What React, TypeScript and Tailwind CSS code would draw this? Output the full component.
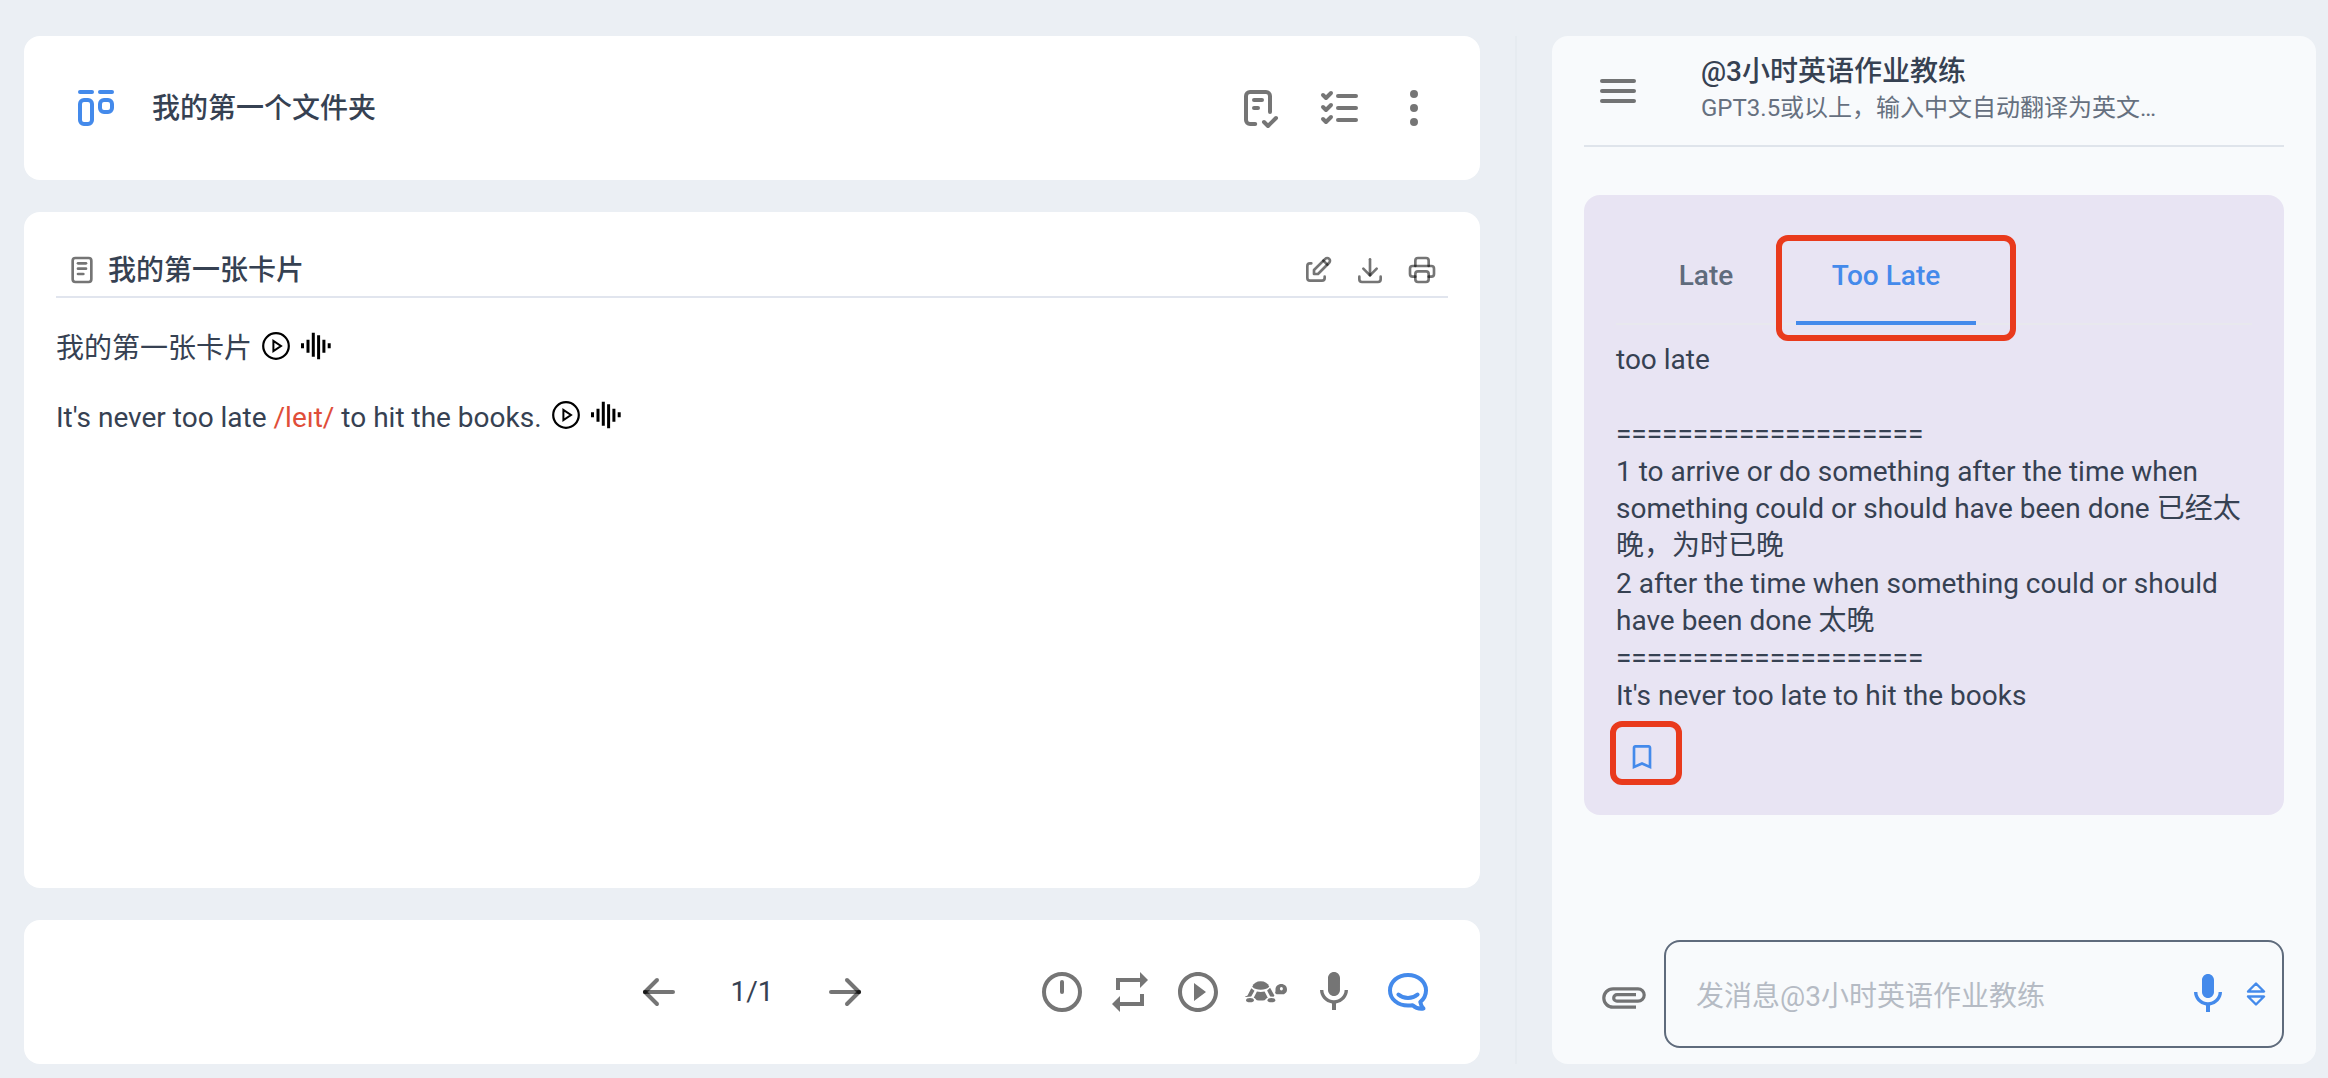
import type { ReactNode } from "react";

/* Outline icon on a 24 unit grid; translucent strokes darken where they cross. */
function Outline({ paths, className = "size-12" }: { paths: string[]; className?: string }) {
  return (
    <svg viewBox="0 0 24 24" fill="none" stroke="currentColor" strokeWidth={2} strokeLinecap="round" strokeLinejoin="round" className={className} aria-hidden="true">
      {paths.map((d) => (
        <path key={d} d={d} />
      ))}
    </svg>
  );
}

function Solid({ d, className = "size-12" }: { d: string; className?: string }) {
  return (
    <svg viewBox="0 0 24 24" fill="currentColor" className={className} aria-hidden="true">
      <path d={d} />
    </svg>
  );
}

const MIC =
  "M12 14c1.66 0 2.99-1.34 2.99-3L15 5c0-1.66-1.34-3-3-3S9 3.34 9 5v6c0 1.66 1.34 3 3 3zm5.3-3c0 3-2.54 5.1-5.3 5.1S6.7 14 6.7 11H5c0 3.41 2.72 6.23 6 6.72V21h2v-3.28c3.28-.48 6-3.3 6-6.72h-1.7z";

function IconButton({ label, children, className = "text-black/54" }: { label: string; children: ReactNode; className?: string }) {
  return (
    <button type="button" aria-label={label} className={`shrink-0 cursor-pointer ${className}`}>
      {children}
    </button>
  );
}

function PlayIcon() {
  return (
    <svg viewBox="0 0 28 28" fill="none" stroke="currentColor" strokeWidth={2.2} className="size-7" aria-hidden="true">
      <circle cx="14" cy="14" r="12.8" />
      <path d="M11.4 8.8v10.4L19 14z" strokeWidth={2} />
    </svg>
  );
}

function WaveIcon() {
  return (
    <svg viewBox="0 0 30 28" fill="currentColor" className="h-7 w-[30px]" aria-hidden="true">
      <path d="M0 11.3h3v5H0zM5.5 7.7h3v13h-3zM10.8 .7h3v24h-3zM16.1 3.3h3v24h-3zM21.4 7.7h3v13h-3zM26.7 11.3h3v5h-3z" />
    </svg>
  );
}

function TurtleIcon() {
  return (
    <svg viewBox="0 0 48 48" fill="currentColor" className="size-12" aria-hidden="true">
      <path d="M10.2 18.8C11.6 15 14.6 13.2 18.7 13.2s7.2 1.8 8.6 5.6C25 21 22 21.7 18.7 21.7s-6.5-.7-8.500-2.900z" />
      <path d="M9.3 20.2l3.2 2.600-3.300 5.800c-2 .2-4 .4-6.300.3.400-.8 1.500-.7 2.600-1.500z" />
      <path d="M14.9 23.600c2.600.4 5 .4 7.700 0l3.200 6.200c-1.700.4-2.400 2.200-3.200 2.400-2.300.3-5.300.3-7.700 0-.9-.3-1.400-2-3.200-2.400z" />
      <path d="M25.1 22.600l3-2.800 4.300 7.800-.8 1.200-3.400-.4z" />
      <ellipse cx="8" cy="32.2" rx="3.9" ry="2.1" />
      <ellipse cx="29.4" cy="32.2" rx="3.9" ry="2.1" />
      <path fillRule="evenodd" d="M39.2 16c3.500 0 5.800 2.300 5.800 5.400 0 2.200-.9 3.300-1.800 3.800l-1.200 1h-7.500l-1.500-1.200c.5-1 .5-2 .5-3.500C33.500 18.300 36 16 39.2 16zm.2 2.900a1.500 1.800 0 1 0 0 3.600 1.500 1.800 0 1 0 0-3.600z" />
    </svg>
  );
}

function ChatIcon() {
  return (
    <svg viewBox="0 0 48 48" fill="none" stroke="currentColor" strokeWidth={4} strokeLinecap="round" strokeLinejoin="round" className="size-12" aria-hidden="true">
      <path d="M36.3 34C40 30.8 42 27 42 22.4 42 13.6 34 7 24 7S6 13.600 6 22.400 14 37.600 24 37.600c1.600 0 3.100-.1 4.600-.4 2.900 2.800 6.600 4 10.900 3.400-1.600-1.800-2.800-4-3.200-6.600z" />
      <path d="M14.4 26.5c5.400 4.700 13.800 4.700 19.200 0" />
    </svg>
  );
}

function PaperclipIcon() {
  return (
    <svg viewBox="0 0 44 22" fill="none" stroke="currentColor" strokeWidth={3.2} className="h-[22px] w-11" aria-hidden="true">
      <path d="M34 20.2H11a9.200 9.200 0 0 1 0-18.400h25a6.200 6.200 0 0 1 0 12.400H15a3.300 3.300 0 0 1 0-6.600h19" />
    </svg>
  );
}

function SortIcon() {
  return (
    <svg viewBox="0 0 20 24" fill="none" stroke="currentColor" strokeWidth={2.4} strokeLinejoin="round" className="h-6 w-5" aria-hidden="true">
      <path d="M10 1.500l8 8H2z" />
      <path d="M10 22.500l8-8H2z" />
    </svg>
  );
}

function AudioButtons() {
  return (
    <>
      <IconButton label="播放" className="ml-2.5 text-black">
        <PlayIcon />
      </IconButton>
      <IconButton label="跟读" className="ml-[11px] text-black">
        <WaveIcon />
      </IconButton>
    </>
  );
}

function FolderHeader() {
  return (
    <header className="flex h-36 shrink-0 items-center rounded-2xl bg-white pr-[42px] pl-12">
      <span className="text-[#448aeb]">
        <Outline
          paths={[
            "M4 4h6",
            "M14 4h6",
            "M6 8h2a2 2 0 0 1 2 2v8a2 2 0 0 1 -2 2h-2a2 2 0 0 1 -2 -2v-8a2 2 0 0 1 2 -2z",
            "M16 8h2a2 2 0 0 1 2 2v2a2 2 0 0 1 -2 2h-2a2 2 0 0 1 -2 -2v-2a2 2 0 0 1 2 -2z",
          ]}
        />
      </span>
      <h1 className="ml-8 flex-1 pt-0.5 font-medium">我的第一个文件夹</h1>
      <IconButton label="作业">
        <Outline paths={["M9.615 20h-2.615a2 2 0 0 1 -2 -2v-12a2 2 0 0 1 2 -2h8a2 2 0 0 1 2 2v8", "M14 19l2 2l4 -4", "M9 8h4", "M9 12h2"]} />
      </IconButton>
      <IconButton label="列表" className="ml-8 text-black/54">
        <Outline paths={["M3.5 5.5l1.5 1.5l2.5 -2.5", "M3.5 11.5l1.5 1.5l2.5 -2.5", "M3.5 17.5l1.5 1.5l2.5 -2.5", "M11 6h9", "M11 12h9", "M11 18h9"]} />
      </IconButton>
      <IconButton label="更多" className="ml-[26px] text-black/54">
        <Solid d="M12 3a2 2 0 1 0 0 4 2 2 0 1 0 0-4zM12 10a2 2 0 1 0 0 4 2 2 0 1 0 0-4zM12 17a2 2 0 1 0 0 4 2 2 0 1 0 0-4z" />
      </IconButton>
    </header>
  );
}

function Card() {
  return (
    <article className="flex-1 rounded-2xl bg-white px-8 pt-8">
      <div className="flex h-[54px] items-center border-b-2 border-[#e1e5ee] px-2.5">
        <span className="text-black/54">
          <Outline
            className="size-8"
            paths={["M7 3h10a2 2 0 0 1 2 2v14a2 2 0 0 1 -2 2h-10a2 2 0 0 1 -2 -2v-14a2 2 0 0 1 2 -2z", "M9 7h6", "M9 11h6", "M9 15h4"]}
          />
        </span>
        <h2 className="ml-2.5 flex-1 pt-0.5 font-medium">我的第一张卡片</h2>
        <div className="flex gap-5">
          <IconButton label="编辑">
            <Outline
              className="size-8"
              paths={[
                "M7 7h-1a2 2 0 0 0 -2 2v9a2 2 0 0 0 2 2h9a2 2 0 0 0 2 -2v-1",
                "M20.385 6.585a2.1 2.1 0 0 0 -2.970 -2.970l-8.415 8.385v3h3l8.385 -8.415z",
                "M16 5l3 3",
              ]}
            />
          </IconButton>
          <IconButton label="下载">
            <Outline className="size-8" paths={["M4 17v2a2 2 0 0 0 2 2h12a2 2 0 0 0 2 -2v-2", "M7 11l5 5l5 -5", "M12 4v12"]} />
          </IconButton>
          <IconButton label="打印">
            <Outline
              className="size-8"
              paths={[
                "M17 17h2a2 2 0 0 0 2 -2v-4a2 2 0 0 0 -2 -2h-14a2 2 0 0 0 -2 2v4a2 2 0 0 0 2 2h2",
                "M17 9v-4a2 2 0 0 0 -2 -2h-6a2 2 0 0 0 -2 2v4",
                "M9 13h6a2 2 0 0 1 2 2v4a2 2 0 0 1 -2 2h-6a2 2 0 0 1 -2 -2v-4a2 2 0 0 1 2 -2z",
              ]}
            />
          </IconButton>
        </div>
      </div>
      <div className="mt-7 flex h-10 items-center">
        <p className="pt-1.5">我的第一张卡片</p>
        <AudioButtons />
      </div>
      <div className="mt-[29px] flex h-10 items-center">
        <p className="pt-1.5">
          It's never too late <span className="text-[#e04e39]">/leıt/</span> to hit the books.
        </p>
        <AudioButtons />
      </div>
    </article>
  );
}

function PlayerBar() {
  return (
    <footer className="grid h-36 shrink-0 grid-cols-[1fr_auto_1fr] items-center rounded-2xl bg-white px-12">
      <span />
      <nav aria-label="翻页" className="flex items-center gap-10">
        <IconButton label="上一张">
          <Outline paths={["M5 12h14", "M5 12l6 6", "M5 12l6 -6"]} />
        </IconButton>
        <span className="w-[58px] text-center">1/1</span>
        <IconButton label="下一张">
          <Outline paths={["M5 12h14", "M13 18l6 -6", "M13 6l6 6"]} />
        </IconButton>
      </nav>
      <div className="flex items-center justify-end gap-5">
        <IconButton label="定时">
          <svg viewBox="0 0 48 48" fill="none" stroke="currentColor" strokeWidth={4} strokeLinecap="round" className="size-12" aria-hidden="true">
            <circle cx="24" cy="24" r="18" />
            <path d="M24 14v10" />
          </svg>
        </IconButton>
        <IconButton label="循环">
          <Solid d="M7 7h10v3l4-4-4-4v3H5v6h2V7zm10 10H7v-3l-4 4 4 4v-3h12v-6h-2v4z" />
        </IconButton>
        <IconButton label="播放">
          <Solid d="M10 16.5l6-4.500-6-4.500v9zM12 2C6.480 2 2 6.480 2 12s4.480 10 10 10 10-4.480 10-10S17.520 2 12 2zm0 18c-4.410 0-8-3.590-8-8s3.590-8 8-8 8 3.590 8 8-3.590 8-8 8z" />
        </IconButton>
        <IconButton label="慢速">
          <TurtleIcon />
        </IconButton>
        <IconButton label="录音">
          <Solid d={MIC} />
        </IconButton>
        <IconButton label="聊天" className="ml-1.5 text-[#448aeb]">
          <ChatIcon />
        </IconButton>
      </div>
    </footer>
  );
}

function Tabs() {
  return (
    <div role="tablist" className="flex h-[98px] border-b-2 border-[#e8e8ee] font-medium">
      <button type="button" role="tab" aria-selected="false" className="h-[98px] w-[180px] cursor-pointer text-[#5f6b7c]">
        Late
      </button>
      <div className="relative h-[98px] w-[180px]">
        <button type="button" role="tab" aria-selected="true" className="size-full cursor-pointer border-b-4 border-[#448aeb] pt-1 text-[#448aeb]">
          Too Late
        </button>
        <span className="pointer-events-none absolute top-2 -right-10 -bottom-4 -left-5 rounded-xl border-6 border-[#e93a1c]" />
      </div>
    </div>
  );
}

const RULE = "====================";

const DEFINITION = [
  `too late\n\n${RULE}`,
  "1 to arrive or do something after the time when something could or should have been done 已经太晚，为时已晚",
  `2 after the time when something could or should have been done 太晚\n${RULE}`,
  "It's never too late to hit the books",
];

function ChatPanel() {
  return (
    <aside className="flex flex-col rounded-2xl bg-[#f8fafc] px-8 pb-4">
      <header className="flex h-[111px] shrink-0 border-b-2 border-[#dfe4eb] pl-2.5">
        <IconButton label="菜单" className="self-center text-black/54">
          <Outline paths={["M4 7h16", "M4 12h16", "M4 17h16"]} />
        </IconButton>
        <div className="ml-[59px] min-w-0 pt-4">
          <h2 className="truncate leading-10 font-medium">@3小时英语作业教练</h2>
          <p className="truncate text-2xl leading-8 text-[#66707f]">GPT3.5或以上，输入中文自动翻译为英文…</p>
        </div>
      </header>
      <section className="mt-12 rounded-2xl bg-[#e8e4f3] px-8 pt-8 pb-[42px]">
        <Tabs />
        <div className="mt-4 flex flex-col gap-px leading-[37px] whitespace-pre-line">
          {DEFINITION.map((text) => (
            <p key={text}>{text}</p>
          ))}
        </div>
        <div className="relative mt-[27px] ml-2.5 size-8">
          <IconButton label="收藏" className="text-[#448aeb]">
            <Solid className="size-8" d="M17 3H7c-1.1 0-1.990.9-1.990 2L5 21l7-3 7 3V5c0-1.100-.9-2-2-2zm0 15l-5-2.180L7 18V5h10v13z" />
          </IconButton>
          <span className="pointer-events-none absolute -top-5 -right-6 -bottom-3 -left-4 rounded-xl border-6 border-[#e93a1c]" />
        </div>
      </section>
      <form className="mt-auto flex items-center">
        <IconButton label="附件" className="mx-[18px] pt-2 text-black/54">
          <PaperclipIcon />
        </IconButton>
        <div className="flex h-[108px] min-w-0 flex-1 items-center rounded-2xl border-2 border-[#5f6b7c] pr-4">
          <input
            type="text"
            aria-label="发消息"
            placeholder="发消息@3小时英语作业教练"
            className="min-w-0 flex-1 pt-1.5 pl-[30px] leading-10 outline-none placeholder:text-[#b5bbc4]"
          />
          <IconButton label="语音输入" className="text-[#448aeb]">
            <Solid d={MIC} />
          </IconButton>
          <IconButton label="展开" className="ml-3.5 text-[#448aeb]">
            <SortIcon />
          </IconButton>
        </div>
      </form>
    </aside>
  );
}

export default function App() {
  return (
    <div className="grid min-h-screen grid-cols-[minmax(0,1456fr)_72px_minmax(0,764fr)] bg-[#ebeff4] pt-9 pr-3 pb-3.5 pl-6 font-[Roboto,'Noto_Sans_CJK_SC',sans-serif] text-[28px] leading-10 text-[#364152]">
      <main className="flex flex-col gap-8">
        <FolderHeader />
        <Card />
        <PlayerBar />
      </main>
      <div className="ml-[35px] w-0.5 bg-[#e6ebf0]" />
      <ChatPanel />
    </div>
  );
}
